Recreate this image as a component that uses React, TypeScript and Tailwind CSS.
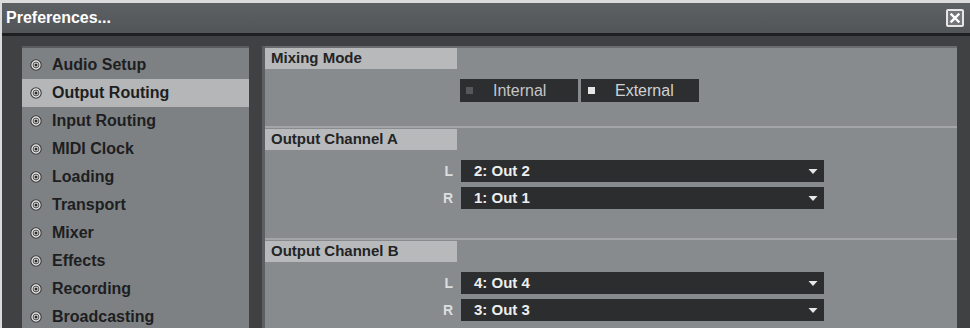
import React from "react";

const font = { fontFamily: '"Liberation Sans", Arial, sans-serif' };

const items = [
  "Audio Setup",
  "Output Routing",
  "Input Routing",
  "MIDI Clock",
  "Loading",
  "Transport",
  "Mixer",
  "Effects",
  "Recording",
  "Broadcasting",
];

function Radio() {
  return (
    <svg width="12" height="12" viewBox="0 0 12 12" className="shrink-0">
      <circle cx="6" cy="6" r="5.2" fill="#e4e4e4" stroke="#3a3a3a" strokeWidth="1.1" />
      <circle cx="6" cy="6" r="2.9" fill="none" stroke="#3a3a3a" strokeWidth="0.9" />
      <circle cx="6" cy="6" r="1.5" fill="#2a2a2a" />
    </svg>
  );
}

function Header({ title }: { title: string }) {
  return (
    <div className="flex h-[21px] w-[192px] shrink-0 items-center bg-[#b7b9bb] pl-[6px] text-[15px] font-bold text-[#232425]">
      {title}
    </div>
  );
}

function Arrow() {
  return (
    <svg width="10" height="7" viewBox="0 0 10 7">
      <path d="M0.5 1 L9.5 1 L5 6 Z" fill="#e8e8e8" />
    </svg>
  );
}

function Dropdown({ label, value }: { label: string; value: string }) {
  return (
    <div className="flex shrink-0 items-center">
      <div className="w-[196px] pr-[8px] text-right text-[14px] font-bold text-[#dcdee0]">{label}</div>
      <div className="flex h-[22px] w-[363px] items-center justify-between bg-[#2b2d2f] pl-[13px] pr-[6px] text-[15px] font-bold text-[#eeeeee]">
        <span>{value}</span>
        <Arrow />
      </div>
    </div>
  );
}

function Divider() {
  return <div className="h-[2px] w-full shrink-0 bg-[#a3a5a7]" />;
}

export default function App() {
  return (
    <div className="h-[328px] w-[970px] overflow-hidden bg-[#dcdcdc] pt-[3px] pl-[2px]" style={font}>
      <div className="flex h-[325px] flex-col overflow-hidden bg-[#3f4143]">
        {/* Title bar */}
        <div className="flex h-[30px] shrink-0 items-center justify-between bg-gradient-to-b from-[#5e6164] to-[#525558] pl-[4px] pr-[6px]">
          <span className="text-[16px] font-bold text-white">Preferences...</span>
          <div className="flex h-[18px] w-[18px] items-center justify-center rounded-[2px] border-2 border-[#e6e6e6] bg-[#74777a]">
            <svg width="10" height="10" viewBox="0 0 10 10">
              <path d="M1.5 1.5 L8.5 8.5 M8.5 1.5 L1.5 8.5" stroke="#ffffff" strokeWidth="2.4" strokeLinecap="square" />
            </svg>
          </div>
        </div>
        <div className="h-[3px] shrink-0 bg-[#1f2022]" />
        {/* Body */}
        <div className="flex min-h-0 flex-1 pl-[20px] pt-[10px] pr-[13px]">
          {/* Left nav */}
          <div className="flex w-[227px] flex-col border-t-2 border-[#5a5d60] bg-[#7e8184] pt-[3px]">
            {items.map((it) => (
              <div
                key={it}
                className={
                  "flex h-[28px] shrink-0 items-center gap-[10px] pl-[8px] text-[16px] font-bold text-[#1d1e1f] " +
                  (it === "Output Routing" ? "bg-[#b4b6b8]" : "")
                }
              >
                <Radio />
                <span>{it}</span>
              </div>
            ))}
          </div>
          {/* Gap */}
          <div className="w-[13px]" />
          <div className="w-[3px] bg-[#5c5f62]" />
          {/* Right panel */}
          <div className="flex flex-1 flex-col border-t-2 border-[#6a6d70] bg-[#888b8e]">
            <Header title="Mixing Mode" />
            <div className="flex h-[57px] shrink-0 items-start pl-[195px] pt-[10px]">
              <div className="flex h-[23px] w-[118px] items-center bg-[#2c2e30] pl-[6px] text-[16px] text-[#c4c6c8]">
                <span className="mr-[20px] inline-block h-[7px] w-[7px] bg-[#55585b]" />
                Internal
              </div>
              <div className="ml-[3px] flex h-[23px] w-[118px] items-center bg-[#2c2e30] pl-[7px] text-[16px] text-[#d0d2d4]">
                <span className="mr-[20px] inline-block h-[7px] w-[7px] bg-[#e6e6e6]" />
                External
              </div>
            </div>
            <Divider />
            <div className="h-[1px] shrink-0" />
            <Header title="Output Channel A" />
            <div className="flex h-[88px] shrink-0 flex-col gap-[5px] pt-[10px]">
              <Dropdown label="L" value="2: Out 2" />
              <Dropdown label="R" value="1: Out 1" />
            </div>
            <Divider />
            <div className="h-[1px] shrink-0" />
            <Header title="Output Channel B" />
            <div className="flex shrink-0 flex-col gap-[5px] pt-[10px]">
              <Dropdown label="L" value="4: Out 4" />
              <Dropdown label="R" value="3: Out 3" />
            </div>
          </div>
        </div>
      </div>
    </div>
  );
}
